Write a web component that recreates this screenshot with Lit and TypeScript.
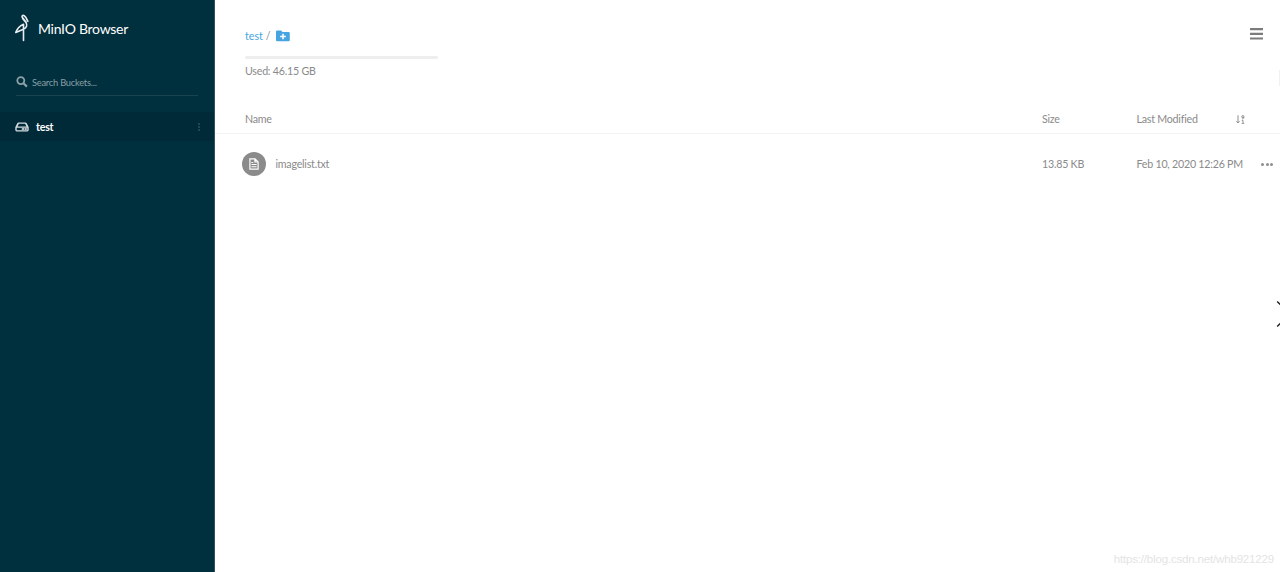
import { LitElement, html, css, svg } from "lit";
import { customElement } from "lit/decorators.js";

const logo = svg`<svg class="logo" width="16" height="28" viewBox="0 0 16 28" fill="none" stroke="#e8eef0" stroke-width="1.6" stroke-linecap="round" stroke-linejoin="round">
  <path d="M12.2 8.2 8.600 3.700C7.200 2.100 8.600.9 10.100 1.600L11.700 3.200 13.900 7.400M8.200 3.200C8.400 5.200 10.600 6.600 12 8.600 13.600 11 12.800 13.600 9.400 15.200L1.800 18.400C3.200 14.600 5.800 11.900 9.500 10.300L9.500 26.400"/></svg>`;
const search = svg`<svg width="12" height="12" viewBox="0 0 12 12" fill="none" stroke="#8b9fa6"><circle cx="4.8" cy="4.6" r="3.5" stroke-width="1.8"/><path d="M7.5 7.3 10.9 10.6" stroke-width="2.2"/></svg>`;
const drive = svg`<svg width="14" height="10" viewBox="0 0 14 10"><path fill="#d5dde0" fill-rule="evenodd" d="M3.6.5h6.8q.9 0 1.3.8l1.8 3.4q.2.4.2.9v2.5q0 1.4-1.4 1.4H1.700Q.3 9.500.3 8.100V5.600q0-.5.2-.9l1.800-3.400Q2.700.5 3.600.5zM3.900 1.800 2.500 4.400h9L10.100 1.800zM1.700 5.700v2.500h10.600V5.700z"/><path fill="#b3c0c5" d="M6.800 6h2.300v2H6.800zM9.600 6h2.200v2H9.600z"/></svg>`;
const folder = svg`<svg width="14" height="12" viewBox="0 0 14 12"><path fill="#46a5e0" d="M1.200.6h3.900l1.400 1.500h6.100q1.200 0 1.200 1.200v6.800q0 1.200-1.200 1.200H1.200Q0 11.300 0 10.100V1.800Q0 .6 1.200.6z"/><path stroke="#fff" stroke-width="1.500" d="M7 3.700v5.600M4.200 6.500h5.600"/></svg>`;
const doc = svg`<svg width="10" height="12" viewBox="0 0 10 12" fill="none" stroke="#fff"><path d="M.9.900h5.200l3 3v7.200H.9zM5.900 1v3h3" stroke-width="1.200"/><path d="M2.400 4.500h1.800M2.400 6.500h5.200M2.400 8.700h5.200" stroke-width="1.100"/></svg>`;
const sort = svg`<svg width="9" height="9" viewBox="0 0 9 9" fill="none" stroke="#8e8e8e"><path d="M2 .3v7.400M.4 6.300 2 8l1.600-1.700" stroke-width="1"/><path d="M5.900.8h1.900v1.700H5.900zM7.800 2v1.100L6 4.200M5.700 5.700 7 5.300v3M5.700 8.400h2.600" stroke-width=".9"/></svg>`;
const menu = svg`<svg width="13" height="12" viewBox="0 0 13 12" fill="#7c7c7c"><path d="M0 0h13v2.200H0zM0 4.700h13v2.200H0zM0 9.400h13v2.200H0z"/></svg>`;

@customElement("app-root")
export class AppRoot extends LitElement {
  static styles = css`
    :host { display: flex; position: relative; height: 572px; width: 1280px; overflow: hidden; background: #fff;
      font-family: Lato, sans-serif; font-size: 10.67px; line-height: 16px; letter-spacing: -0.23px; white-space: nowrap; color: #8a8a8a; }
    * { box-sizing: border-box; }
    svg { display: block; flex: none; }
    aside { width: 215px; flex: none; background: #002f3e; border-right: 1px solid #33535f; }
    .brand { display: flex; align-items: center; height: 56px; padding-left: 14px; color: #fff; font-size: 14px; letter-spacing: -0.28px; }
    .brand span { margin-left: 8px; padding-top: 2px; }
    .search { display: flex; align-items: center; margin: 14px 16px 0 16px; height: 26px; border-bottom: 1px solid #1a4350; font-size: 9.3px; color: #8b9fa6; }
    .search svg { margin-top: -2px; }
    .search span { margin: 0 0 0 4px; }
    .bucket { display: flex; align-items: center; height: 29px; margin-top: 16px; padding: 0 14px 0 15px; background: #002a38; color: #fff; }
    .bucket b { margin-left: 7px; flex: 1; }
    .dots { display: flex; flex-direction: column; gap: 1px; }
    .dots i { width: 2px; height: 2px; background: #234650; }
    main { flex: 1; display: flex; flex-direction: column; }
    header { display: flex; justify-content: space-between; height: 105px; padding: 28px 17px 0 30px; }
    .path { display: flex; align-items: center; gap: 3px; letter-spacing: 0; }
    .path a { color: #46a5e0; }
    .path svg { margin-left: 2.500px; }
    .meter { width: 193px; height: 3px; border-radius: 2px; margin: 12px 0 4px; background: #eee; }
    .row { display: grid; grid-template-columns: 797px 94.500px 99.500px auto; align-items: center; padding-left: 30px; }
    .head { height: 29px; border-bottom: 1px solid #f2f2f2; }
    .file { height: 60px; }
    .name { display: flex; align-items: center; margin-left: -3.500px; gap: 10px; }
    .disc { display: grid; place-items: center; width: 24px; height: 24px; border-radius: 50%; background: #8b8b8b; }
    .more { display: flex; gap: 1.500px; justify-self: end; margin-right: 7px; }
    .more i { width: 3px; height: 3px; border-radius: 50%; background: #8e8e8e; }
    .chevron { position: absolute; right: 0; top: 300px; }
    .edge { position: absolute; right: 0; top: 70px; width: 1px; height: 16px; background: #f1f1f1; }
    .mark { position: absolute; right: 6px; top: 551px; font: 11.500px/16px "Liberation Sans", sans-serif; letter-spacing: -0.170px; color: #e4e4e4; }
  `;

  render() {
    return html`
      <aside>
        <div class="brand">${logo}<span>MinIO Browser</span></div>
        <div class="search">${search}<span>Search Buckets...</span></div>
        <div class="bucket">${drive}<b>test</b><div class="dots"><i></i><i></i><i></i></div></div>
      </aside>
      <main>
        <header>
          <div>
            <div class="path"><a>test</a><span>/</span>${folder}</div>
            <div class="meter"></div>
            <div>Used: 46.15 GB</div>
          </div>
          ${menu}
        </header>
        <div class="row head"><span>Name</span><span>Size</span><span>Last Modified</span>${sort}</div>
        <div class="row file">
          <div class="name"><div class="disc">${doc}</div><span>imagelist.txt</span></div>
          <span>13.85 KB</span><span>Feb 10, 2020 12:26 PM</span>
          <div class="more"><i></i><i></i><i></i></div>
        </div>
      </main>
      <div class="edge"></div>
      <svg class="chevron" width="4" height="28" viewBox="0 0 4 28" fill="none" stroke="#222" stroke-width="1.500"><path d="M1.200 1.500 5.200 5.500M1.200 26.500 5.200 22.500"/></svg>
      <div class="mark">https://blog.csdn.net/whb921229</div>
    `;
  }
}
